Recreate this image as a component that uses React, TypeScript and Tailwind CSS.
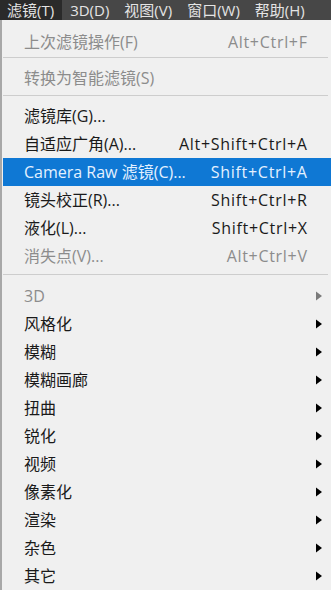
import React from "react";

type Item =
  | { kind: "sep"; cls: string }
  | { kind: "item"; label: string; shortcut?: string; disabled?: boolean; active?: boolean; sub?: boolean };

const items: Item[] = [
  { kind: "item", label: "上次滤镜操作(F)", shortcut: "Alt+Ctrl+F", disabled: true },
  { kind: "sep", cls: "mt-[1px] mb-[7px]" },
  { kind: "item", label: "转换为智能滤镜(S)", disabled: true },
  { kind: "sep", cls: "mt-[3px] mb-[6px]" },
  { kind: "item", label: "滤镜库(G)..." },
  { kind: "item", label: "自适应广角(A)...", shortcut: "Alt+Shift+Ctrl+A" },
  { kind: "item", label: "Camera Raw 滤镜(C)...", shortcut: "Shift+Ctrl+A", active: true },
  { kind: "item", label: "镜头校正(R)...", shortcut: "Shift+Ctrl+R" },
  { kind: "item", label: "液化(L)...", shortcut: "Shift+Ctrl+X" },
  { kind: "item", label: "消失点(V)...", shortcut: "Alt+Ctrl+V", disabled: true },
  { kind: "sep", cls: "mt-[4px] mb-[8px]" },
  { kind: "item", label: "3D", disabled: true, sub: true },
  { kind: "item", label: "风格化", sub: true },
  { kind: "item", label: "模糊", sub: true },
  { kind: "item", label: "模糊画廊", sub: true },
  { kind: "item", label: "扭曲", sub: true },
  { kind: "item", label: "锐化", sub: true },
  { kind: "item", label: "视频", sub: true },
  { kind: "item", label: "像素化", sub: true },
  { kind: "item", label: "渲染", sub: true },
  { kind: "item", label: "杂色", sub: true },
  { kind: "item", label: "其它", sub: true },
];

const menus = ["滤镜(T)", "3D(D)", "视图(V)", "窗口(W)", "帮助(H)"];

export default function App() {
  return (
    <div
      className="w-[331px] h-[590px] overflow-hidden bg-[#f0f0f0] text-[16px]"
      style={{ fontFamily: '"Open Sans", "Noto Sans CJK SC", sans-serif' }}
    >
      <div className="flex h-[20px] bg-[#474747] text-[#e4e4e4] leading-[20px] text-[15px]">
        {menus.map((m, i) => (
          <div
            key={m}
            className={
              i === 0
                ? "bg-[#2a2a2a] pl-[7px] pr-[8px]"
                : "pl-[8px] pr-[7px]"
            }
          >
            {m}
          </div>
        ))}
      </div>
      <div className="flex h-[570px] border-l-[2px] border-[#a8a8a8] pt-[8px] flex-col">
        {items.map((it, idx) =>
          it.kind === "sep" ? (
            <div key={idx} className={`${it.cls} ml-[1px] mr-[3px] h-[2px] bg-[#cdcdcd]`} />
          ) : (
            <div
              key={idx}
              className={`flex h-[28px] items-center ml-[1px] shrink-0 ${
                it.active ? "bg-[#0f78d4] text-[#e4f1ff]" : it.disabled ? "text-[#8c8c8c]" : "text-[#1a1a1a]"
              }`}
            >
              <div className="flex-1 pl-[21px] whitespace-nowrap">{it.label}</div>
              {it.shortcut && (
                <div className="whitespace-nowrap tracking-[0.7px] mr-[-0.7px]">{it.shortcut}</div>
              )}
              <div className="w-[24px] flex items-center pl-[9px]">
                {it.sub && (
                  <svg width="6" height="10" viewBox="0 0 6 10">
                    <polygon points="0,0.5 6,5 0,9.5" fill={it.disabled ? "#7a7a7a" : "#000"} />
                  </svg>
                )}
              </div>
            </div>
          )
        )}
      </div>
    </div>
  );
}
